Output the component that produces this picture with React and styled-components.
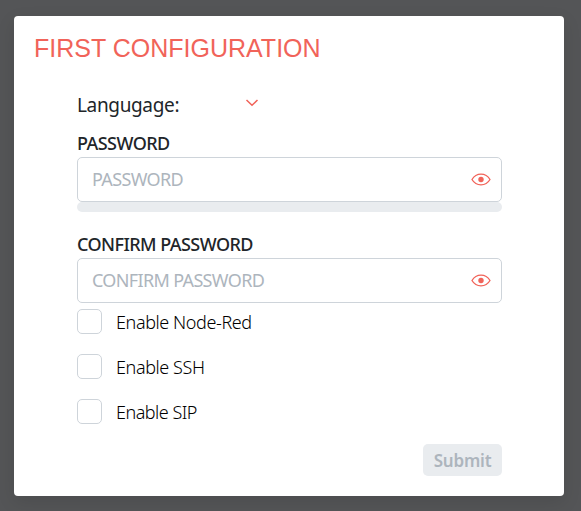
import React, { useState } from "react";
import styled, { createGlobalStyle } from "styled-components";

const ChevronIcon = () => (
  <svg width="14" height="14" viewBox="0 0 14 14" fill="none" stroke="#f16359" strokeWidth="1.5">
    <path d="M1.5 2 L7 7.3 L12.5 2" />
  </svg>
);

const EyeIcon = () => (
  <svg width="20" height="14" viewBox="0 0 20 14">
    <path
      d="M1 6.5 C5.2 -0.6 14.8 -0.6 19 6.5 C14.8 13.6 5.2 13.6 1 6.5 Z"
      fill="none"
      stroke="#f16359"
      strokeWidth="1.3"
    />
    <circle cx="10" cy="6.5" r="2.7" fill="#f16359" />
  </svg>
);

const PasswordField = ({ label, children }) => {
  const [visible, setVisible] = useState(false);

  return (
    <Field>
      <Label>{label}</Label>
      <InputWrap>
        <Input type={visible ? "text" : "password"} placeholder={label} aria-label={label} />
        <IconButton type="button" onClick={() => setVisible(!visible)}>
          <EyeIcon />
        </IconButton>
      </InputWrap>
      {children}
    </Field>
  );
};

const OPTIONS = [
  { title: "Enable Node-Red", spacing: "-0.4px" },
  { title: "Enable SSH", spacing: "-0.4px" },
  { title: "Enable SIP", spacing: "-0.5px" },
];

export default function App() {
  return (
    <Overlay>
      <GlobalStyle />
      <Modal>
        <Title>FIRST CONFIGURATION</Title>
        <Form onSubmit={(e) => e.preventDefault()}>
          <LanguageRow>
            <LanguageLabel>Langugage:</LanguageLabel>
            <ChevronIcon />
          </LanguageRow>
          <PasswordField label="PASSWORD">
            <Strength />
          </PasswordField>
          <PasswordField label="CONFIRM PASSWORD" />
          <Options>
            {OPTIONS.map((item) => (
              <Option key={item.title} $spacing={item.spacing}>
                <Checkbox type="checkbox" />
                <span>{item.title}</span>
              </Option>
            ))}
          </Options>
          <Submit disabled>Submit</Submit>
        </Form>
      </Modal>
    </Overlay>
  );
}

const GlobalStyle = createGlobalStyle`
  * {
    box-sizing: border-box;
  }

  body {
    margin: 0;
    font-family: "Noto Sans", "Open Sans", sans-serif;
    color: #212529;
  }
`;

const Overlay = styled.div`
  height: 100vh;
  padding: 16px 17px 15px 14px;
  background: #545557;
  overflow: hidden;
`;

const Modal = styled.div`
  height: 480px;
  padding: 20px;
  background: #fff;
  border-radius: 4px;
  box-shadow: 0 6px 18px rgba(0, 0, 0, 0.1);
`;

const Title = styled.h1`
  margin: 0;
  font: 400 25px/24px "Liberation Sans", sans-serif;
  color: #f16359;
  white-space: nowrap;
`;

const Form = styled.form`
  display: flex;
  flex-direction: column;
  width: 425px;
  margin: 31px 0 0 43px;
`;

const LanguageRow = styled.div`
  display: flex;
  align-items: center;
  height: 28px;
  gap: 66px;
`;

const LanguageLabel = styled.span`
  width: 102px;
  font-size: 19px;
  line-height: 28px;
  letter-spacing: -0.35px;
  white-space: nowrap;
`;

const Field = styled.div`
  height: 101px;
  padding-top: 13px;

  & + & {
    height: 83px;
  }
`;

const Label = styled.div`
  margin-bottom: 3px;
  font-size: 18px;
  font-weight: 500;
  line-height: 22px;
  letter-spacing: -0.55px;
  white-space: nowrap;
`;

const InputWrap = styled.div`
  display: flex;
  align-items: center;
  height: 45px;
  padding: 0 10px 0 14px;
  border: 1px solid #ced4da;
  border-radius: 5px;
`;

const Input = styled.input`
  flex: 1;
  min-width: 0;
  padding: 0 0 2px;
  border: 0;
  outline: 0;
  background: none;
  font-family: inherit;
  font-size: 18px;
  letter-spacing: -0.65px;

  &::placeholder {
    color: #adb5bd;
  }
`;

const IconButton = styled.button`
  display: flex;
  padding: 0;
  border: 0;
  background: none;
`;

const Strength = styled.div`
  height: 10px;
  background: #e9ecef;
  border-radius: 5px;
`;

const Options = styled.div`
  display: flex;
  flex-direction: column;
  gap: 20px;
  margin-top: 6px;
`;

const Option = styled.label`
  display: flex;
  align-items: center;
  gap: 14px;
  height: 25px;
  font-size: 18px;
  font-weight: 300;
  line-height: 25px;
  letter-spacing: ${(p) => p.$spacing};
  color: #000;
  white-space: nowrap;

  span {
    padding-top: 2px;
  }
`;

const Checkbox = styled.input`
  appearance: none;
  width: 25px;
  height: 25px;
  margin: 0;
  border: 1px solid #ced4da;
  border-radius: 5px;
  background: #fff;
`;

const Submit = styled.button`
  align-self: flex-end;
  width: 79px;
  height: 32px;
  margin-top: 20px;
  padding: 0;
  border: 0;
  border-radius: 5px;
  background: #e9ecef;
  color: #adb5bd;
  font-family: inherit;
  font-size: 17px;
  font-weight: 600;
  letter-spacing: -0.2px;
`;
